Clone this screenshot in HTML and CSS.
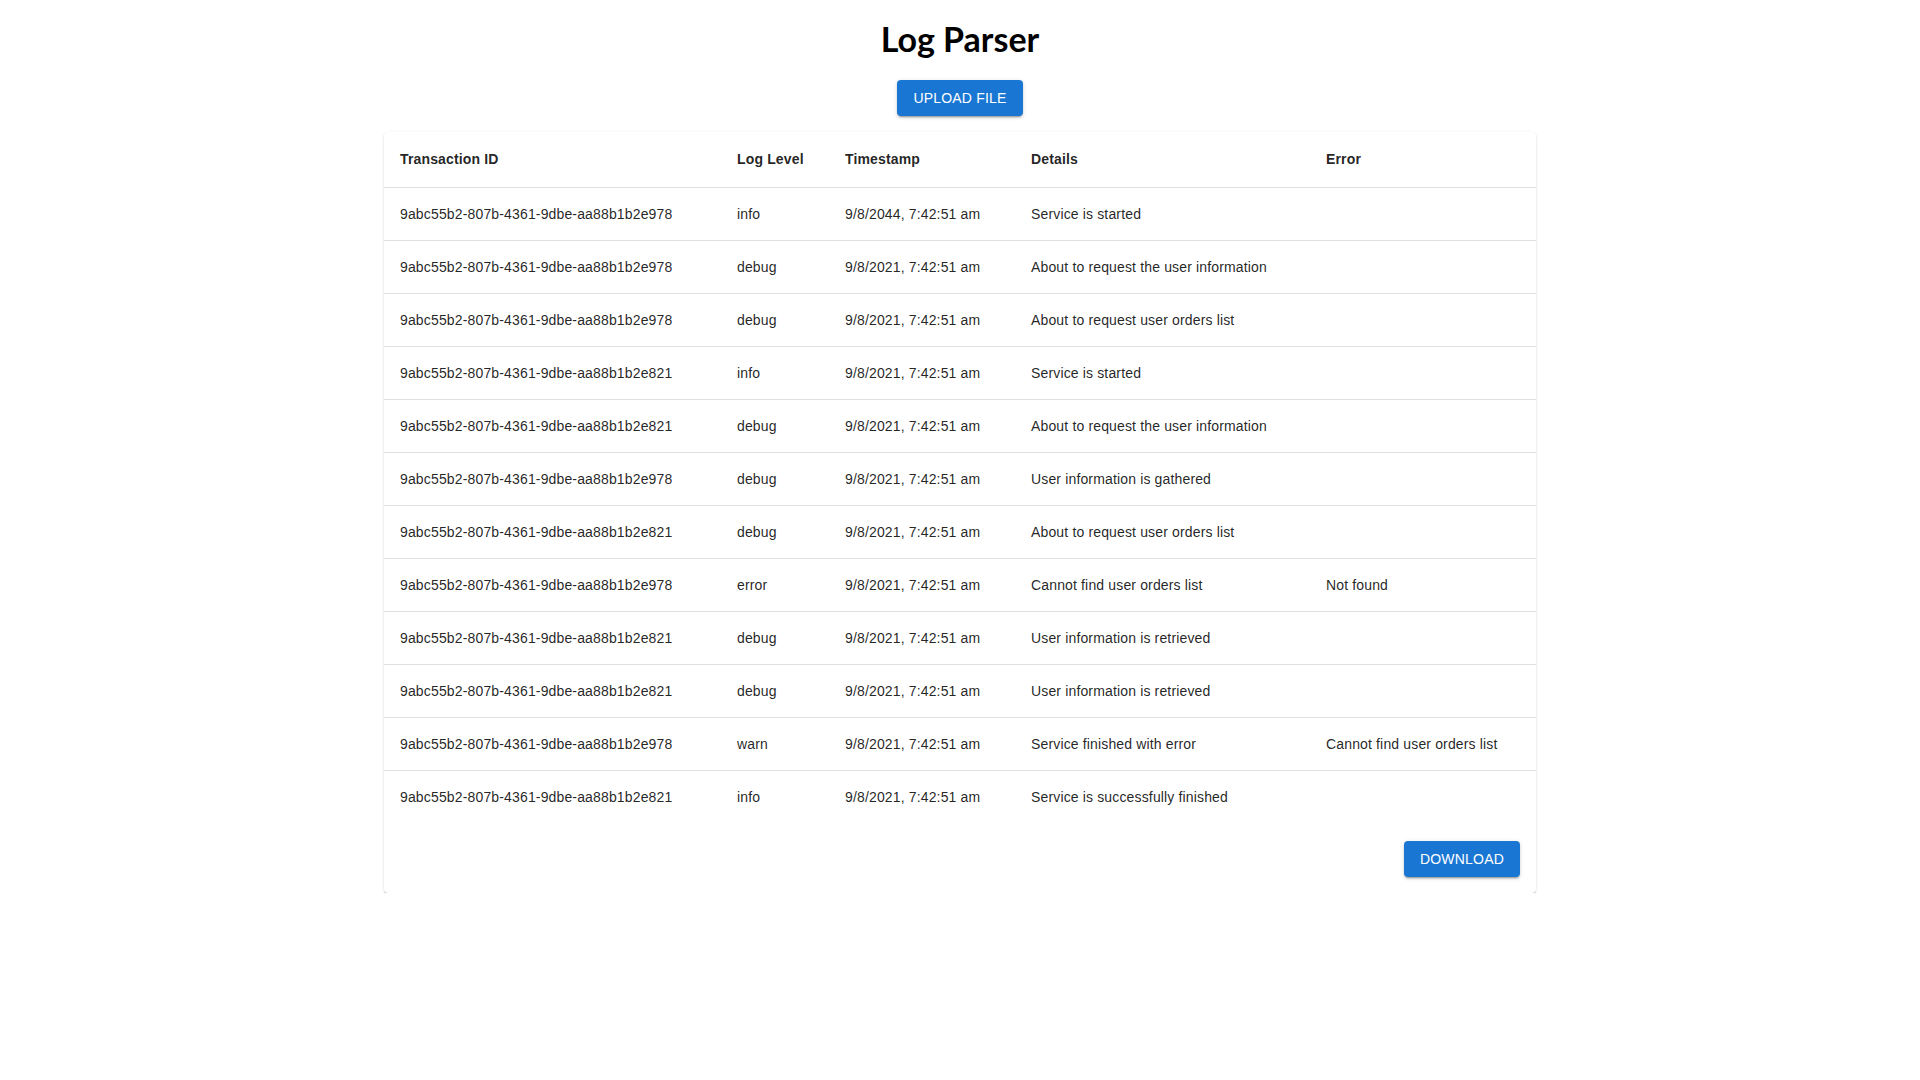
FILE: index.html
```html
<!DOCTYPE html>
<html lang="en">
<head>
<meta charset="utf-8">
<title>Log Parser</title>
<link rel="stylesheet" href="styles.css">
</head>
<body>
<main class="container">
  <h1 class="title">Log Parser</h1>
  <div class="upload-row">
    <button class="btn">Upload file</button>
  </div>
  <section class="card">
    <table class="log-table">
      <thead>
        <tr>
          <th class="c-id">Transaction ID</th>
          <th class="c-level">Log Level</th>
          <th class="c-time">Timestamp</th>
          <th class="c-details">Details</th>
          <th class="c-error">Error</th>
        </tr>
      </thead>
      <tbody>
        <tr><td>9abc55b2-807b-4361-9dbe-aa88b1b2e978</td><td>info</td><td>9/8/2044, 7:42:51 am</td><td>Service is started</td><td></td></tr>
        <tr><td>9abc55b2-807b-4361-9dbe-aa88b1b2e978</td><td>debug</td><td>9/8/2021, 7:42:51 am</td><td>About to request the user information</td><td></td></tr>
        <tr><td>9abc55b2-807b-4361-9dbe-aa88b1b2e978</td><td>debug</td><td>9/8/2021, 7:42:51 am</td><td>About to request user orders list</td><td></td></tr>
        <tr><td>9abc55b2-807b-4361-9dbe-aa88b1b2e821</td><td>info</td><td>9/8/2021, 7:42:51 am</td><td>Service is started</td><td></td></tr>
        <tr><td>9abc55b2-807b-4361-9dbe-aa88b1b2e821</td><td>debug</td><td>9/8/2021, 7:42:51 am</td><td>About to request the user information</td><td></td></tr>
        <tr><td>9abc55b2-807b-4361-9dbe-aa88b1b2e978</td><td>debug</td><td>9/8/2021, 7:42:51 am</td><td>User information is gathered</td><td></td></tr>
        <tr><td>9abc55b2-807b-4361-9dbe-aa88b1b2e821</td><td>debug</td><td>9/8/2021, 7:42:51 am</td><td>About to request user orders list</td><td></td></tr>
        <tr><td>9abc55b2-807b-4361-9dbe-aa88b1b2e978</td><td>error</td><td>9/8/2021, 7:42:51 am</td><td>Cannot find user orders list</td><td>Not found</td></tr>
        <tr><td>9abc55b2-807b-4361-9dbe-aa88b1b2e821</td><td>debug</td><td>9/8/2021, 7:42:51 am</td><td>User information is retrieved</td><td></td></tr>
        <tr><td>9abc55b2-807b-4361-9dbe-aa88b1b2e821</td><td>debug</td><td>9/8/2021, 7:42:51 am</td><td>User information is retrieved</td><td></td></tr>
        <tr><td>9abc55b2-807b-4361-9dbe-aa88b1b2e978</td><td>warn</td><td>9/8/2021, 7:42:51 am</td><td>Service finished with error</td><td>Cannot find user orders list</td></tr>
        <tr><td>9abc55b2-807b-4361-9dbe-aa88b1b2e821</td><td>info</td><td>9/8/2021, 7:42:51 am</td><td>Service is successfully finished</td><td></td></tr>
      </tbody>
    </table>
    <div class="card-actions">
      <button class="btn">Download</button>
    </div>
  </section>
</main>
</body>
</html>
```
FILE: styles.css
```css
* { box-sizing: border-box; }
html, body { margin: 0; padding: 0; background: #fff; }
body {
  font-family: "Liberation Sans", Arial, sans-serif;
  color: rgba(0, 0, 0, 0.87);
}
.container {
  max-width: 1200px;
  margin: 0 auto;
  padding: 0 24px;
}
.title {
  margin: 18px 0 0;
  font-family: Lato, "Open Sans", sans-serif;
  font-weight: 700;
  font-size: 34px;
  line-height: 42px;
  text-align: center;
  color: #000;
}
.upload-row {
  display: flex;
  justify-content: center;
  margin-top: 20px;
}
.btn {
  font-family: "Liberation Sans", Arial, sans-serif;
  font-weight: 400;
  font-size: 14px;
  line-height: 24px;
  letter-spacing: 0.2px;
  text-transform: uppercase;
  color: #fff;
  background: #1976d2;
  border: 0;
  border-radius: 4px;
  padding: 6px 16px;
  height: 36px;
  box-shadow: 0px 3px 1px -2px rgba(0,0,0,0.2), 0px 2px 2px 0px rgba(0,0,0,0.14), 0px 1px 5px 0px rgba(0,0,0,0.12);
  cursor: pointer;
}
.card {
  margin-top: 16px;
  background: #fff;
  border-radius: 4px;
  box-shadow: 0px 2px 1px -1px rgba(0,0,0,0.2), 0px 1px 1px 0px rgba(0,0,0,0.14), 0px 1px 3px 0px rgba(0,0,0,0.12);
  overflow: hidden;
}
.log-table {
  width: 100%;
  border-collapse: collapse;
  table-layout: fixed;
}
.log-table th, .log-table td {
  text-align: left;
  padding: 16px;
  font-size: 14px;
  letter-spacing: 0.01071em;
  border-bottom: 1px solid rgb(224, 224, 224);
  white-space: nowrap;
}
.log-table th {
  font-weight: 700;
  line-height: 23px;
}
.log-table td {
  font-weight: 400;
  line-height: 20px;
}
.log-table tbody tr:last-child td { border-bottom: 0; }
.c-id { width: 337px; }
.c-level { width: 108px; }
.c-time { width: 186px; }
.c-details { width: 295px; }
.c-error { width: 226px; }
.card-actions {
  display: flex;
  justify-content: flex-end;
  padding: 18px 16px 16px;
}
```
